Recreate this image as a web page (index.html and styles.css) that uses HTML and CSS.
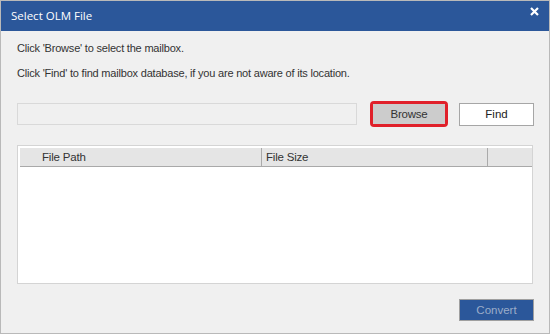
FILE: index.html
```html
<!DOCTYPE html>
<html>
<head>
<meta charset="utf-8">
<link rel="stylesheet" href="styles.css">
</head>
<body>
<div class="dialog">
  <div class="titlebar">
    <span class="title">Select OLM File</span>
    <svg class="close" width="9" height="9" viewBox="0 0 9 9"><path d="M1 1 L8 8 M8 1 L1 8" stroke="#fff" stroke-width="2.2" fill="none"/></svg>
  </div>
  <div class="content">
    <p class="line first">Click 'Browse' to select the mailbox.</p>
    <p class="line second">Click 'Find' to find mailbox database, if you are not aware of its location.</p>
    <div class="row">
      <div class="pathbox"></div>
      <div class="browse-ring"><button class="browse">Browse</button></div>
      <button class="find">Find</button>
    </div>
    <div class="table">
      <div class="thead">
        <div class="th c1">File Path</div>
        <div class="th c2">File Size</div>
        <div class="th c3"></div>
      </div>
      <div class="tbody"></div>
    </div>
    <div class="footer">
      <button class="convert">Convert</button>
    </div>
  </div>
</div>
</body>
</html>
```
FILE: styles.css
```css
* { box-sizing: border-box; }
html, body { margin: 0; padding: 0; }
body { width: 550px; height: 334px; overflow: hidden; background: #f0f0f0; }
.dialog {
  width: 550px; height: 334px;
  border: 1px solid #b9b9b9;
  background: #f0f0f0;
  display: flex; flex-direction: column;
  font-family: "Liberation Sans", Arial, sans-serif;
}
.titlebar {
  height: 30px; background: #2b579a;
  display: flex; align-items: center; justify-content: space-between;
  padding: 0 10px 0 10px;
}
.title { color: #fff; font-family: "Open Sans", "Noto Sans", sans-serif; font-size: 11.5px; margin-top: -1px; }
.close { margin-top: -9px; margin-right: 0; }
.content { flex: 1; display: flex; flex-direction: column; padding: 0 15px 0 16px; }
.line { margin: 0; font-size: 11px; line-height: 14px; color: #333; letter-spacing: -0.2px; }
.first { margin-top: 10px; }
.second { margin-top: 11px; }
.row { display: flex; align-items: center; margin-top: 21px; height: 26px; }
.pathbox { width: 340px; height: 22px; border: 1px solid #d9d9d9; background: #f0f0f0; }
.browse-ring {
  margin-left: 13px; width: 78px; height: 26px;
  border: 3px solid #e0202a; border-radius: 4px; padding: 0;
  display: flex;
}
.browse {
  flex: 1; border: 0; background: #cccccc; margin: 0; padding: 0;
  font-family: "Liberation Sans", Arial, sans-serif; font-size: 11.5px; color: #333;
  letter-spacing: -0.2px;
}
.find {
  margin-left: 11px; width: 75px; height: 23px;
  border: 1px solid #a6a6a6; background: #fff; padding: 0;
  font-family: "Liberation Sans", Arial, sans-serif; font-size: 11.5px; color: #222;
}
.table {
  margin-top: 18px; width: 516px; height: 139px;
  border: 1px solid #d4d4d4; background: #fff;
  padding: 2px 0 0 2px;
  display: flex; flex-direction: column;
}
.thead { display: flex; height: 19px; background: #e5e5e5; border-bottom: 1px solid #a9a9a9; }
.th { font-size: 11.5px; color: #333; line-height: 18px; letter-spacing: -0.2px; }
.c1 { width: 242px; padding-left: 22px; border-right: 1px solid #aaaaaa; }
.c2 { width: 226px; padding-left: 4px; border-right: 1px solid #aaaaaa; }
.c3 { flex: 1; }
.tbody { flex: 1; }
.footer { display: flex; justify-content: flex-end; margin-top: 15px; }
.convert {
  width: 75px; height: 22px; margin-right: 0;
  background: #2b579a; border: 1px solid #a0a0a0; padding: 0;
  font-family: "Liberation Sans", Arial, sans-serif; font-size: 11.5px; color: #9cadc9;
}
```
